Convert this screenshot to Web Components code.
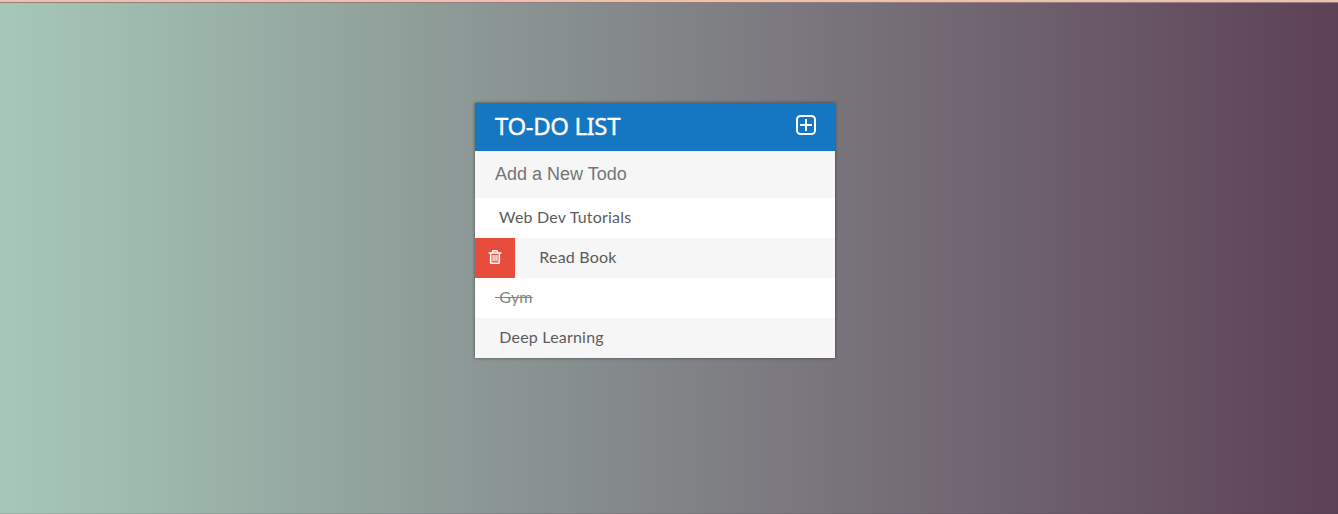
<!DOCTYPE html>
<html lang="en">
<head>
<meta charset="utf-8">
<title>To-Do List</title>
<style>
html,body{margin:0;height:100%;overflow:hidden}
body{font-family:Lato,sans-serif}
</style>
</head>
<body>
<todo-page>
  <todo-card>
    <todo-header slot="header">TO-DO LIST</todo-header>
    <todo-field slot="field" placeholder="Add a New Todo"></todo-field>
    <todo-item>Web Dev Tutorials</todo-item>
    <todo-item active>Read Book</todo-item>
    <todo-item completed>Gym</todo-item>
    <todo-item>Deep Learning</todo-item>
  </todo-card>
</todo-page>
<script>
const define = (name, html, setup) => customElements.define(name, class extends HTMLElement {
  constructor() {
    super();
    this.attachShadow({mode: 'open'}).innerHTML = html;
  }
  connectedCallback() { if (setup) setup(this, this.shadowRoot); }
});

define('todo-page', `<style>
:host{display:flex;flex-direction:column;align-items:center;box-sizing:border-box;height:100vh;
  background:linear-gradient(to right,#a6c8b8,#5d4157);border-bottom:1px solid rgba(60,50,60,.12)}
.bar{align-self:stretch;height:2px;background:#e8c3b1;border-bottom:1px solid #9b7c79;flex:none}
main{width:360px;margin:100px 28px 0 0}
</style><div class="bar"></div><main><slot></slot></main>`);

define('todo-card', `<style>
:host{display:block;background:#f7f7f7;box-shadow:0 0 3px rgba(0,0,0,.5)}
::slotted(todo-item:nth-of-type(odd)){background:#fff}
::slotted(todo-item:nth-of-type(even)){background:#f6f6f6}
</style><slot name="header"></slot><slot name="field"></slot><slot></slot>`);

define('todo-header', `<style>
:host{display:flex;justify-content:space-between;align-items:center;height:48px;padding:0 19px 0 20px;box-sizing:border-box;
  background:#1577c2;color:#fff;font:400 24px/46px "Noto Sans",sans-serif;letter-spacing:-.4px;-webkit-text-stroke:.35px #fff}
span{height:48px}
svg{width:20px;height:20px;margin-top:-5px;display:block}
</style><span><slot></slot></span>
<svg viewBox="0 0 20 20" fill="none" stroke="#fff" stroke-width="2" aria-hidden="true"><rect x="1" y="1" width="18" height="18" rx="3.5"/><path d="M10 4v12M4 10h12"/></svg>`);

define('todo-field', `<style>
:host{display:block;height:47px;background:#f6f6f6}
input{display:block;box-sizing:border-box;width:100%;height:47px;border:0;padding:0 20px 1px;margin:0;outline:0;background:none;
  font:18px "Liberation Sans",Arial,sans-serif;color:#2980b9}
input::placeholder{color:#757575;opacity:1}
</style><input type="text">`, (el, root) => { root.querySelector('input').placeholder = el.getAttribute('placeholder'); });

define('todo-item', `<style>
:host{display:flex;height:40px;line-height:38px;font-size:16px;color:#5c5c5c;letter-spacing:.2px}
.trash{display:none;width:40px;height:40px;background:#e84c3d;align-items:center;justify-content:center;flex:none}
:host([active]) .trash{display:flex}
.label{margin-left:20px;white-space:pre}
:host([completed]) .label{color:#858585;text-decoration:line-through}
svg{width:14px;height:16px;display:block;margin-top:-2px}
</style><span class="trash"><svg viewBox="0 0 14 16" fill="none" stroke="#fff" stroke-width="1.6" aria-hidden="true"><path d="M.6 4h12.8M4.3 3.5l.8-1.8h3.8l.8 1.8M2.7 4v9.2q0 1.1 1.1 1.1h6.4q1.1 0 1.1-1.1V4"/><path d="M5.1 6v6.3M7 6v6.3M8.9 6v6.3" stroke-width="1.2"/></svg></span><span class="label"> <slot></slot></span>`);
</script>
</body>
</html>
